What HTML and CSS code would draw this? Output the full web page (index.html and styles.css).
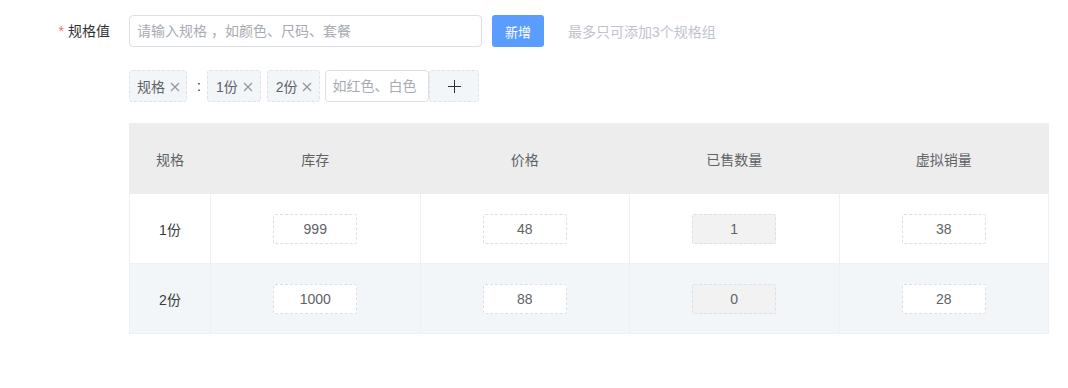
FILE: index.html
```html
<!DOCTYPE html>
<html lang="zh-CN">
<head>
    <meta charset="UTF-8">
    <title>规格值</title>
    <link rel="stylesheet" href="styles.css">
</head>
<body>
    <div class="form-item">
        <label class="form-label"><span class="required">*</span>规格值</label>
        <div class="form-content">
            <div class="spec-add">
                <input class="spec-input" type="text" placeholder="请输入规格 ，如颜色、尺码、套餐">
                <button class="btn-primary">新增</button>
                <span class="hint">最多只可添加3个规格组</span>
            </div>

            <div class="spec-group">
                <span class="tag">规格<svg class="tag-close" viewBox="0 0 10 10"><path d="M1 1L9 9M9 1L1 9"/></svg></span>
                <span class="colon">:</span>
                <span class="tag tag-value">1份<svg class="tag-close" viewBox="0 0 10 10"><path d="M1 1L9 9M9 1L1 9"/></svg></span>
                <span class="tag tag-value">2份<svg class="tag-close" viewBox="0 0 10 10"><path d="M1 1L9 9M9 1L1 9"/></svg></span>
                <input class="value-input" type="text" placeholder="如红色、白色">
                <button class="btn-plus"><svg viewBox="0 0 13 13"><path d="M6.5 0V13M0 6.5H13"/></svg></button>
            </div>

            <table class="sku-table">
                <thead>
                    <tr>
                        <th class="col-name">规格</th>
                        <th>库存</th>
                        <th>价格</th>
                        <th>已售数量</th>
                        <th>虚拟销量</th>
                    </tr>
                </thead>
                <tbody>
                    <tr>
                        <td>1份</td>
                        <td><input class="cell-input" value="999"></td>
                        <td><input class="cell-input" value="48"></td>
                        <td><input class="cell-input" value="1" disabled></td>
                        <td><input class="cell-input" value="38"></td>
                    </tr>
                    <tr class="striped">
                        <td>2份</td>
                        <td><input class="cell-input" value="1000"></td>
                        <td><input class="cell-input" value="88"></td>
                        <td><input class="cell-input" value="0" disabled></td>
                        <td><input class="cell-input" value="28"></td>
                    </tr>
                </tbody>
            </table>
        </div>
    </div>
</body>
</html>
```

FILE: styles.css
```css
body {
    margin: 0;
    font-family: "Liberation Sans", "Noto Sans CJK SC", sans-serif;
    font-size: 14px;
    color: #303133;
    background: #fff;
}

.form-item {
    display: flex;
    padding-top: 15px;
}

.form-label {
    width: 110px;
    padding-right: 19px;
    text-align: right;
    line-height: 32px;
    color: #303133;
    flex-shrink: 0;
}
.required {
    color: #f56c6c;
    margin-right: 4px;
}

.form-content {
    width: 919px;
}

.spec-add {
    display: flex;
    align-items: center;
    height: 32px;
}
.spec-input {
    box-sizing: border-box;
    width: 353px;
    height: 32px;
    padding: 0 7px;
    border: 1px solid #dcdfe6;
    border-radius: 4px;
    font-family: inherit;
    font-size: 14px;
    outline: none;
}
.spec-input::placeholder,
.value-input::placeholder {
    color: #a8abb2;
}
.btn-primary {
    margin-left: 10px;
    width: 52px;
    height: 32px;
    border: none;
    border-radius: 3px;
    background: #5b9cff;
    color: #fff;
    font-family: inherit;
    font-size: 13px;
    cursor: pointer;
}
.hint {
    margin-left: 24px;
    color: #c0c4cc;
    font-size: 14px;
}

.spec-group {
    display: flex;
    align-items: center;
    margin-top: 23px;
    height: 32px;
}
.tag {
    box-sizing: border-box;
    display: inline-flex;
    align-items: center;
    height: 32px;
    padding: 0 6px 0 7px;
    border: 1px dashed #dfe2e8;
    border-radius: 3px;
    background: #f3f6f9;
    color: #606266;
    margin-right: 6px;
}
.tag-value {
    padding: 0 7px 0 8px;
}
.tag-close {
    width: 10px;
    height: 10px;
    margin-left: 5px;
    margin-top: 1px;
    stroke: #909399;
    stroke-width: 1.2;
    fill: none;
}
.colon {
    margin: 0 6px 0 4px;
    color: #303133;
}
.value-input {
    box-sizing: border-box;
    width: 104px;
    height: 32px;
    padding: 0 6px;
    margin-left: -1px;
    border: 1px solid #dcdfe6;
    border-radius: 4px;
    font-family: inherit;
    font-size: 14px;
    outline: none;
}
.btn-plus {
    box-sizing: border-box;
    display: flex;
    align-items: center;
    justify-content: center;
    width: 50px;
    height: 32px;
    border: 1px dashed #dfe2e8;
    border-radius: 3px;
    background: #f3f6f9;
    cursor: pointer;
}
.btn-plus svg {
    width: 13px;
    height: 13px;
    stroke: #303133;
    stroke-width: 1;
    fill: none;
}

.sku-table {
    margin-top: 21px;
    width: 920px;
    border-collapse: collapse;
    text-align: center;
}
.sku-table th {
    height: 69px;
    padding: 0;
    background: #ededed;
    color: #606266;
    font-weight: normal;
    border: 1px solid #ededed;
}
.sku-table td {
    height: 69px;
    padding: 0;
    border: 1px solid #eef0f3;
    color: #3a3c40;
}
.sku-table .col-name {
    width: 80px;
}
.striped td {
    background: #f3f6f9;
}

.cell-input {
    box-sizing: border-box;
    width: 84px;
    height: 30px;
    border: 1px dashed #dcdfe6;
    border-radius: 2px;
    background: #fff;
    text-align: center;
    font-family: inherit;
    font-size: 14px;
    color: #606266;
    outline: none;
}
.cell-input:disabled {
    background: #f2f2f2;
    color: #606266;
}
```
